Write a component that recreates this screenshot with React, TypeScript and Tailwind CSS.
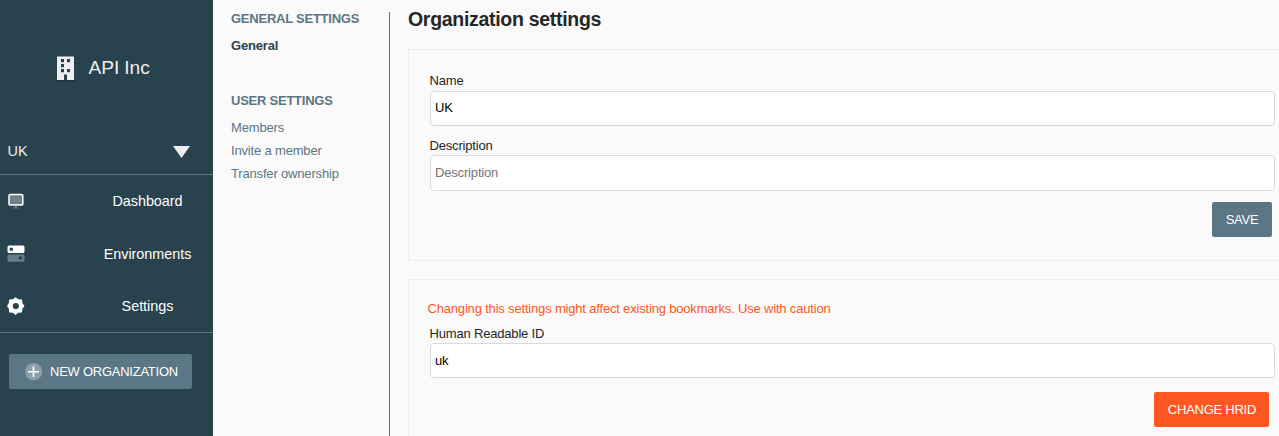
import React from "react";

function BuildingIcon() {
  return (
    <svg width="21" height="26" viewBox="0 0 21 26" className="block shrink-0">
      <path d="M0 24h21v1.600H0z" fill="#203640" />
      <path
        fillRule="evenodd"
        fill="#eeeeee"
        d="M2 0.400h17v23.600h-7v-5.500h-3v5.500H2zM6 3v3.200h3V3zM12 3v3.200h3V3zM6 8v3.200h3V8zM6 13v3.200h3v-3.200zM12 13v3.200h3v-3.200z"
      />
    </svg>
  );
}

function MonitorIcon() {
  return (
    <svg width="18" height="18" viewBox="0 0 18 18" className="block shrink-0">
      <rect x="2" y="2.600" width="13.800" height="10.500" rx="1.200" fill="#6f818a" stroke="#fff" strokeWidth="1.500" />
      <path d="M8 14.100h1.800v1.400h1.900v1H6v-1h2z" fill="#697b84" />
    </svg>
  );
}

function ServersIcon() {
  return (
    <svg width="18" height="18" viewBox="0 0 18 18" className="block shrink-0">
      <path fillRule="evenodd" fill="#fff" d="M2 .5h14a1.500 1.500 0 0 1 1.500 1.500v4.500a1.500 1.500 0 0 1-1.500 1.500H2A1.500 1.500 0 0 1 .5 6.500v-4.500A1.500 1.500 0 0 1 2 .5zM4.300 2.500a1.800 1.800 0 1 0 0 3.600a1.800 1.800 0 0 0 0-3.600z" />
      <path fillRule="evenodd" fill="#697b84" d="M2 9.400h14a1.500 1.500 0 0 1 1.500 1.500v4.300a1.500 1.500 0 0 1-1.500 1.500H2A1.500 1.500 0 0 1 .5 15.200v-4.300A1.500 1.500 0 0 1 2 9.400zM13.500 11.200a1.800 1.800 0 1 0 0 3.600a1.800 1.800 0 0 0 0-3.600z" />
    </svg>
  );
}

function GearIcon() {
  return (
    <svg width="18" height="18" viewBox="0 0 18 18" className="block shrink-0">
      <path
        fillRule="evenodd"
        fill="#fff"
        d="M8.600 .2L11.300 2.200L15 2.600L15.400 6.300L17.500 9L15.400 11.700L15 15.400L11.300 15.800L8.600 17.900L5.900 15.800L2.200 15.400L1.800 11.700L0 9L1.800 6.300L2.200 2.600L5.900 2.200zM8.800 5.900a3.100 3.100 0 1 0 0 6.200a3.100 3.100 0 0 0 0-6.200z"
      />
    </svg>
  );
}

function PlusIcon() {
  return (
    <svg width="18" height="18" viewBox="0 0 18 18" className="block shrink-0">
      <circle cx="8.700" cy="8.700" r="8.700" fill="#8c9fa8" />
      <path d="M7.700 3.200h1.600v4.700h4.700v1.600H9.300v4.700H7.700V9.500H3V7.900h4.700z" fill="#fff" />
    </svg>
  );
}

function NavItem({ icon, label }: { icon: React.ReactNode; label: string }) {
  return (
    <a className="flex h-[52.500px] items-center pl-[7px] text-[14.400px] tracking-[-0.03px] text-white">
      {icon}
      <span className="flex-1 pl-[68px] pr-[11px] pt-0.5 text-center">{label}</span>
    </a>
  );
}

function Sidebar() {
  return (
    <aside className="flex w-[213px] shrink-0 flex-col bg-[#29434e] text-[#eeeeee]">
      <div className="flex h-[135px] items-center pl-[55px] pt-[3px]">
        <BuildingIcon />
        <span className="pb-px pl-[12.500px] text-[19.200px] tracking-[-0.1px]">API Inc</span>
      </div>
      <div className="flex h-10 items-center justify-between border-b border-[#5b7684] pb-[6px] pl-[7.500px] pr-[23px] text-[14.400px]">
        <span className="pt-px">UK</span>
        <svg width="17" height="12" viewBox="0 0 17 12" className="block">
          <path d="M0 0h17L8.500 12z" fill="#eeeeee" />
        </svg>
      </div>
      <nav className="h-[158px] border-b border-[#5b7684]">
        <NavItem icon={<MonitorIcon />} label="Dashboard" />
        <NavItem icon={<ServersIcon />} label="Environments" />
        <NavItem icon={<GearIcon />} label="Settings" />
      </nav>
      <button className="ml-[9px] mt-[21px] flex h-[35px] w-[183px] items-center gap-[7px] rounded-xs bg-[#5b7684] pl-4 text-[13px] tracking-[-0.25px] text-white">
        <PlusIcon />
        <span className="whitespace-nowrap">NEW ORGANIZATION</span>
      </button>
    </aside>
  );
}

function SettingsMenu() {
  return (
    <div className="mt-3 flex w-[177px] shrink-0 flex-col whitespace-nowrap border-r border-[#546e7a] pl-[18px] text-[13px] leading-[23px] tracking-[-0.17px] text-[#5b7684]">
      <h4 className="-mt-[5px] font-bold tracking-[-0.24px]">GENERAL SETTINGS</h4>
      <a className="mt-1 font-bold text-[#29434e]">General</a>
      <h4 className="mt-8 font-bold tracking-[-0.24px]">USER SETTINGS</h4>
      <a className="mt-1">Members</a>
      <a>Invite a member</a>
      <a>Transfer ownership</a>
    </div>
  );
}

const inputClass =
  "block w-[845px] rounded-[4px] border border-[#d9d9d9] bg-white pl-1 text-[13px] tracking-[-0.17px] text-black outline-none placeholder:text-[#757575]";

function Content() {
  return (
    <main className="w-[889px] pl-[18px] text-[13px] tracking-[-0.18px] text-[#262626]">
      <h2 className="h-[49px] pt-[7px] text-[19.500px] font-bold leading-6 tracking-[-0.3px]">Organization settings</h2>
      <section className="flex h-[212px] w-[900px] flex-col border border-[#eeeeee] pl-[21px]">
        <label className="-ml-[0.500px] mt-[21px] h-5 leading-5">Name</label>
        <input className={`${inputClass} h-[35px] pb-0.5`} defaultValue="UK" />
        <label className="-ml-[0.500px] mt-[9px] h-5 leading-[22px]">Description</label>
        <input className={`${inputClass} h-9 pb-0.5`} placeholder="Description" />
        <button className="ml-[782px] mt-[11px] h-[35px] w-[60px] rounded-xs bg-[#5b7684] text-[13px] tracking-[-0.25px] text-white">SAVE</button>
      </section>
      <section className="mt-[18px] flex h-[200px] w-[900px] flex-col border border-[#eeeeee] pl-[21px]">
        <p className="-ml-[2.500px] mt-[19px] h-5 leading-5 text-[#ff5722]">
          Changing this settings might affect existing bookmarks. Use with caution
        </p>
        <label className="-ml-[0.500px] mt-1 h-5 leading-[22px]">Human Readable ID</label>
        <input className={`${inputClass} h-[35px]`} defaultValue="uk" />
        <button className="ml-[724px] mt-[14px] h-[35px] w-[115px] rounded-xs bg-[#ff5722] pl-px text-[13px] tracking-[-0.25px] text-white">CHANGE HRID</button>
      </section>
    </main>
  );
}

export default function App() {
  return (
    <div className="flex h-[436px] w-[1279px] overflow-hidden bg-[#fafafa] font-['Liberation_Sans',Arial,sans-serif]">
      <Sidebar />
      <SettingsMenu />
      <Content />
    </div>
  );
}
